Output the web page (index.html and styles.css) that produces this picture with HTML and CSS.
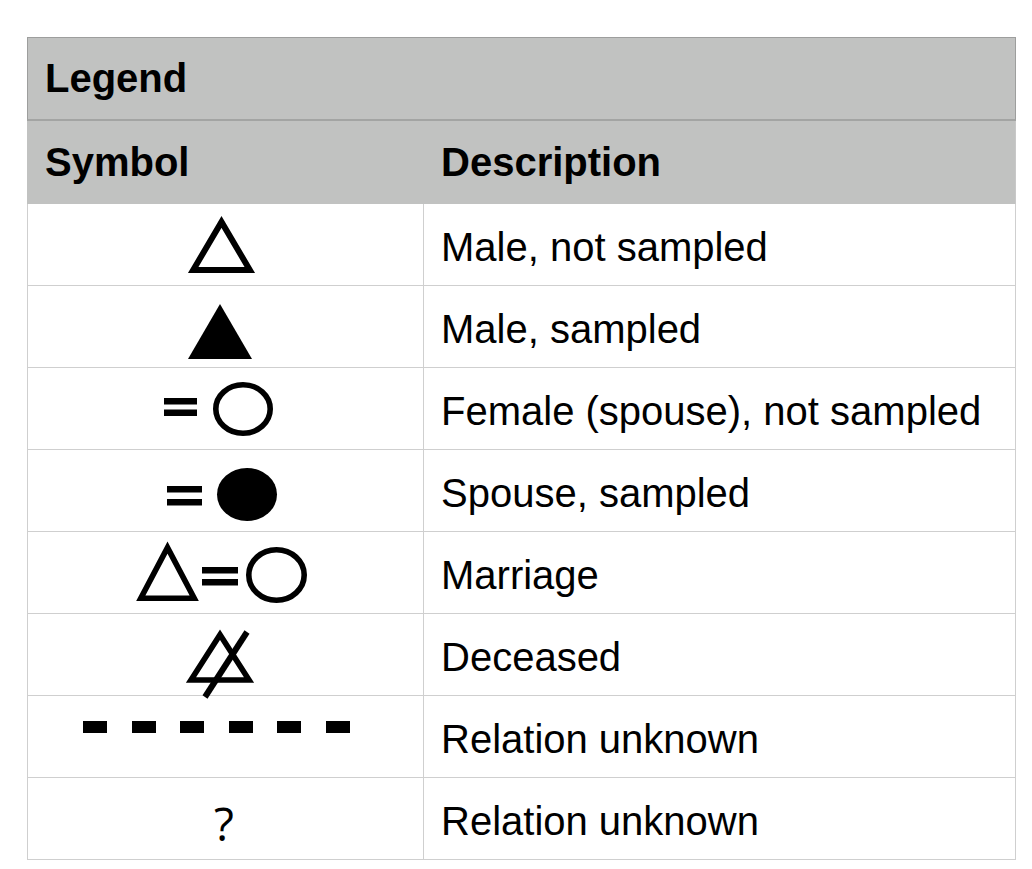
FILE: index.html
```html
<!DOCTYPE html>
<html lang="en">
<head>
<meta charset="utf-8">
<title>Legend</title>
<link rel="stylesheet" href="styles.css">
</head>
<body>
<div class="legend">
  <div class="title">Legend</div>
  <div class="row head">
    <div class="cell sym-h">Symbol</div>
    <div class="cell desc">Description</div>
  </div>

  <div class="row">
    <div class="cell sym">
      <svg viewBox="0 0 395 81" width="395" height="81">
        <polygon points="165.2,66 221.8,66 193.5,17.9" fill="none" stroke="#000" stroke-width="6" stroke-linejoin="miter"/>
      </svg>
    </div>
    <div class="cell desc">Male, not sampled</div>
  </div>

  <div class="row">
    <div class="cell sym">
      <svg viewBox="0 0 395 81" width="395" height="81">
        <polygon points="160,73 224,73 192,18" fill="#000"/>
      </svg>
    </div>
    <div class="cell desc">Male, sampled</div>
  </div>

  <div class="row">
    <div class="cell sym">
      <svg viewBox="0 0 395 81" width="395" height="81">
        <rect x="136" y="30" width="33" height="6.5" fill="#000"/>
        <rect x="136" y="41.5" width="33" height="6.5" fill="#000"/>
        <ellipse cx="215" cy="41" rx="27.2" ry="24.2" fill="none" stroke="#000" stroke-width="5.6"/>
      </svg>
    </div>
    <div class="cell desc">Female (spouse), not sampled</div>
  </div>

  <div class="row">
    <div class="cell sym">
      <svg viewBox="0 0 395 81" width="395" height="81">
        <rect x="139" y="36" width="35" height="6.5" fill="#000"/>
        <rect x="139" y="49" width="35" height="6.5" fill="#000"/>
        <ellipse cx="219" cy="44.5" rx="30" ry="26.5" fill="#000"/>
      </svg>
    </div>
    <div class="cell desc">Spouse, sampled</div>
  </div>

  <div class="row">
    <div class="cell sym">
      <svg viewBox="0 0 395 81" width="395" height="81">
        <polygon points="112.8,66.2 166.2,66.2 139.5,15.6" fill="none" stroke="#000" stroke-width="5.6" stroke-linejoin="miter"/>
        <rect x="174" y="35" width="36" height="6.5" fill="#000"/>
        <rect x="174" y="47" width="36" height="6.5" fill="#000"/>
        <ellipse cx="248.5" cy="43" rx="27.7" ry="25.2" fill="none" stroke="#000" stroke-width="5.6"/>
      </svg>
    </div>
    <div class="cell desc">Marriage</div>
  </div>

  <div class="row">
    <div class="cell sym">
      <svg class="over" viewBox="0 0 395 81" width="395" height="81">
        <polygon points="163,66 221,66 192,20.8" fill="none" stroke="#000" stroke-width="5.6" stroke-linejoin="miter"/>
        <line x1="219" y1="18" x2="177" y2="83" stroke="#000" stroke-width="6"/>
      </svg>
    </div>
    <div class="cell desc">Deceased</div>
  </div>

  <div class="row">
    <div class="cell sym">
      <svg viewBox="0 0 395 81" width="395" height="81">
        <rect x="55" y="25" width="24" height="12" fill="#000"/>
        <rect x="104" y="25" width="24" height="12" fill="#000"/>
        <rect x="152" y="25" width="24" height="12" fill="#000"/>
        <rect x="201" y="25" width="24" height="12" fill="#000"/>
        <rect x="249" y="25" width="24" height="12" fill="#000"/>
        <rect x="298" y="25" width="24" height="12" fill="#000"/>
      </svg>
    </div>
    <div class="cell desc">Relation unknown</div>
  </div>

  <div class="row">
    <div class="cell sym q"><span class="qmark">?</span></div>
    <div class="cell desc">Relation unknown</div>
  </div>
</div>
</body>
</html>
```

FILE: styles.css
```css
html, body {
  margin: 0;
  padding: 0;
  background: #ffffff;
}

body {
  padding: 37px 0 0 27px;
  font-family: "Liberation Sans", Arial, Helvetica, sans-serif;
  color: #000;
}

.legend {
  width: 989px;
  box-sizing: border-box;
}

.title {
  box-sizing: border-box;
  height: 84px;
  line-height: 81px;
  padding-left: 17px;
  background: #c1c2c1;
  border: 1px solid #9d9e9d;
  border-bottom: 2px solid #a3a4a3;
  font-size: 40px;
  font-weight: bold;
}

.row {
  display: grid;
  grid-template-columns: 396px 1fr;
  box-sizing: border-box;
  height: 82px;
  border-left: 1px solid #cfcfcf;
  border-right: 1px solid #cfcfcf;
  border-bottom: 1px solid #cfcfcf;
}

.row.head {
  height: 83px;
  background: #c1c2c1;
  border-left-color: #c1c2c1;
  border-right-color: #c8c8c8;
  border-bottom: none;
}

.cell {
  box-sizing: border-box;
  height: 100%;
}

.sym {
  border-right: 1px solid #cfcfcf;
  position: relative;
}

.sym svg {
  display: block;
}

.sym svg.over {
  overflow: visible;
  position: relative;
  z-index: 1;
}

.head .cell {
  font-size: 40px;
  font-weight: bold;
  line-height: 83px;
  border-right: none;
}

.sym-h {
  padding-left: 17px;
}

.head .desc {
  padding-left: 17px;
  padding-top: 0;
}

.desc {
  font-size: 40px;
  line-height: 81px;
  padding-left: 17px;
  padding-top: 3px;
  white-space: nowrap;
}

.q {
  display: flex;
  justify-content: center;
  align-items: flex-start;
}

.qmark {
  display: block;
  margin-left: -3px;
  font-family: "Open Sans", "DejaVu Sans", sans-serif;
  font-size: 46px;
  line-height: 81px;
  padding-top: 5px;
}
```
